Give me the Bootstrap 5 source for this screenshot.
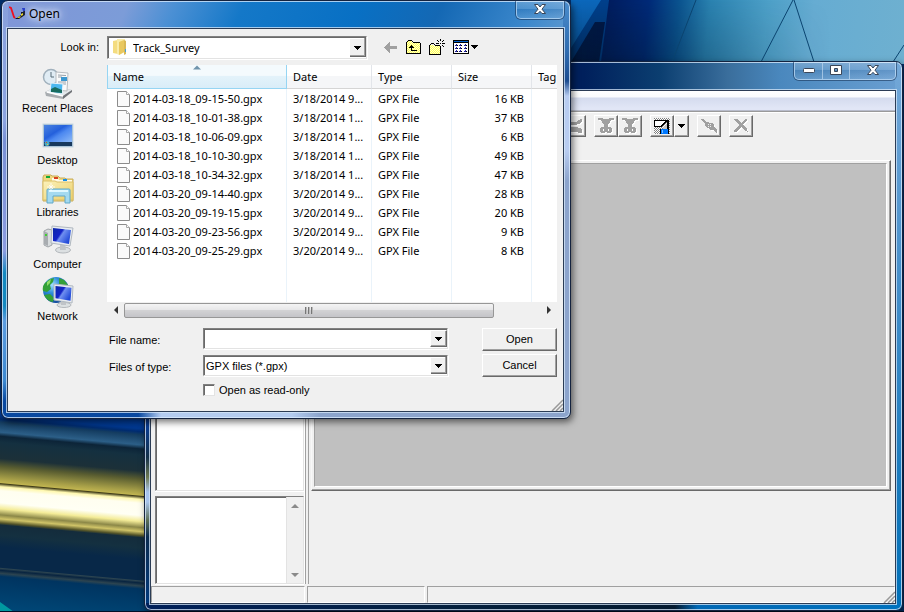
<!DOCTYPE html>
<html lang="en">
<head>
<meta charset="utf-8">
<meta name="viewport" content="width=device-width, initial-scale=1">
<title>Open</title>
<link href="https://cdn.jsdelivr.net/npm/bootstrap@5.3.0/dist/css/bootstrap.min.css" rel="stylesheet">
<style>
:root{--ui:"Liberation Sans",Arial,sans-serif;--shell:"Noto Sans","Open Sans",sans-serif;--face:#f0f0f0}
body{font-family:var(--ui);font-size:11px;line-height:16px;color:#000;background:#02285a}
.desktop{min-height:100vh}
.wallpaper{z-index:0}
.win{border:1px solid #14233f;border-radius:7px;box-shadow:inset 0 0 0 1px rgba(222,238,255,.75),2px 3px 7px rgba(0,0,0,.55)}
.client{background:var(--face);border:1px solid #2b3c55;box-shadow:0 0 0 1px rgba(215,232,250,.75)}
button,input,select{font:inherit;color:inherit;border-radius:0}

/* Editor window */
.win-main{left:144px;right:1px;top:61px;bottom:1px;z-index:1;padding:0 6px 6px 5px;
 background:
 linear-gradient(90deg,#00205a,#04203e 40%,#041a30 70%,#0068b5 73%,#0072be) left bottom/100% 7px no-repeat,
 linear-gradient(#00205c 0,#00205c 340px,#0a3c90 365px,#14304a 395px,#6c7850 415px,#a8c4ec 430px,#a8c4ec 440px,#5c7058 458px,#0c2c50 475px,#003a80) left top/6px 100% no-repeat,
 linear-gradient(#74a8d8,#4c92cc 35%,#1478bc 80%,#0070b8) right top/7px 100% no-repeat,
 linear-gradient(90deg,#00205c 58%,#0b3e70 68%,#3a6e9c 77%,#4a88be 84%,#6a9fd2) 0 0/100% 100%}
.title-main{height:28px}
.caption-group{border:1px solid rgba(200,226,250,.7);border-top:0;border-radius:0 0 5px 5px;overflow:hidden;box-shadow:0 0 0 1px rgba(20,45,80,.55)}
.caption-btn{border:0;background:linear-gradient(rgba(255,255,255,.22),rgba(255,255,255,.1) 50%,rgba(0,20,60,.06) 50%,rgba(255,255,255,.1));height:17px;width:27px}
.caption-btn + .caption-btn{border-left:1px solid rgba(190,215,240,.7)}
.caption-btn.close-cap{width:46px}
.menu-strip{height:20px;background:linear-gradient(#fff 0,#fafbfd 6px,#d4dbee 7px,#e1e6f6 17px);border-bottom:1px solid #b8bccb}
.tool-strip{height:49px;padding:3px 0 0 411px;border-top:1px solid #9a9a9a;box-shadow:inset 0 1px #fff}
.tool{width:24px;height:22px;border:1px solid;border-color:#fff #696969 #696969 #fff;background:var(--face);box-shadow:inset -1px -1px #a0a0a0}
.tool-drop{width:15px}
.left-pane{width:153px;padding-left:4px}
.sunk{background:#fff;border:1px solid;border-color:#808080 #e3e3e3 #e3e3e3 #808080;box-shadow:inset 1px 1px #696969,0 1px #fff}
.note-pane{height:88px;margin:5px 0 1px}
.v-scroll{width:17px;background:#f0f0f0;border-left:1px solid #e3e3e3;padding:5px 0 4px}
.split{width:5px;border-right:1px solid #a0a0a0;border-left:1px solid #fff;margin:0 2px 1px 0}
.split i{width:1px;background:#a0a0a0}
.right-pane{padding-right:4px}
.frame-out{border:1px solid;border-color:#fff #696969 #696969 #f8f8f8;box-shadow:inset -1px -1px #a0a0a0;padding:2px 3px 3px 2px}
.frame-in{background:#c0c0c0;border:1px solid;border-color:#a0a0a0 #fff #fff #a0a0a0}
.below-frame{height:94px}
.status-bar{height:18px;gap:2px;padding-top:1px}
.status-cell{border:1px solid;border-color:#a0a0a0 #fff #fff #a0a0a0}
.cell-a{width:154px}.cell-b{width:118px}

/* File dialog */
.win-open{left:1px;right:333px;top:0;z-index:2;padding:0 6px 6px 5px;
 background:
 linear-gradient(90deg,#0848a0 0,#0848a0 24%,#b4ccf0 28%,#b4ccf0 51%,#8ca4cc 56%,#8ca4cc) left bottom/100% 7px no-repeat,
 linear-gradient(#88a0dc 0,#8ca4e0 120px,#7890d4 140px,#8c9ce0 250px,#1488c0 272px,#1488c0 305px,#5c9ce0 320px,#3c88d0 380px,#0848a0 400px) left top/6px 100% no-repeat,
 linear-gradient(#4a8ccc 0,#2f6cb0 50px,#1c4c90 80px,#b8ccf0 95px,#b8ccf0 150px,#8ca4cc 180px) right top/7px 100% no-repeat,
 linear-gradient(115deg,#8096d8 0,#7c9cd8 22%,#4c90d4 30%,#1478c8 42%,#0870c4 62%,#1468b4 76%,#3c88cc 92%,#5c98d0) 0 0/100% 28px no-repeat,#6c90cc}
.title-open{height:27px;padding-left:2px}
.title-left{gap:3px;height:25px}
.title-text{font-family:var(--shell);font-size:12px;text-shadow:0 0 5px #dfe8ff,0 0 8px #dfe8ff,0 0 12px #dfe8ff}
.places{width:99px;padding-top:3px}
.place{border:0;background:none;padding:0;height:52px}
.look-row{padding-top:7px;height:36px}
.look-label{width:99px;padding:3px 8px 0 0}
.combo{height:23px;border:1px solid;border-color:#808080 #e3e3e3 #e3e3e3 #808080;box-shadow:inset 1px 1px #696969,1px 1px #fff;background:#fff;padding:1px 0 1px 1px}
.combo-look{width:260px}
.combo-sm{height:21px}
.combo select,.combo input{border:0;outline:0;background:#fff;appearance:none;padding:0 1px;min-width:0}
.combo select{padding-right:17px;
 background:#fff url("data:image/svg+xml,%3Csvg xmlns='http://www.w3.org/2000/svg' width='17' height='100%25' shape-rendering='crispEdges'%3E%3Crect width='17' height='100%25' fill='%23696969'/%3E%3Crect width='16' y='-1' height='100%25' fill='%23a0a0a0'/%3E%3Crect width='15' y='-2' height='100%25' fill='%23f0f0f0'/%3E%3Cpath d='M0 0h15v1h-14v40h-1z' fill='%23fff'/%3E%3Crect y='-1' width='1' height='100%25' fill='%23fff'/%3E%3Csvg y='50%25' overflow='visible'%3E%3Cpath d='M5 -2h7v1h-1v1h-1v1h-1v1h-1v-1h-1v-1h-1v-1h-1z'/%3E%3C/svg%3E%3C/svg%3E") no-repeat right center/17px 100%}
.combo .drop{width:17px;border:1px solid;border-color:#fff #696969 #696969 #fff;box-shadow:inset -1px -1px #a0a0a0;background:var(--face)}
.shell{font-family:var(--shell)}
.nav-tools{padding:3px 0 0 17px;gap:8px}
.nav-tools button{border:0;background:none;padding:0}
.list-area{min-width:0}
.edge{margin-right:6px}
.files{height:237px;background:#fff}
.files table{table-layout:fixed;height:100%;border-collapse:separate;border-spacing:0}
.files th{height:24px;padding:0 0 0 6px;font-weight:400;background:linear-gradient(#fff 50%,#f5f6f8 50%);border-right:1px solid #e2e5ea;border-bottom:1px solid #d5d5d5;overflow:hidden;white-space:nowrap}
.files th.sorted{background:linear-gradient(#f4fafd 45%,#e3f2fa 50%,#d9edf8);border:1px solid #96d5f3;border-top:0;padding-left:5px}
.files td{height:19px;padding:0 6px;border-right:1px solid #eaf3fa;white-space:nowrap;overflow:hidden}
.files td:first-child{padding-left:10px}
.files td.text-end{padding-right:7px}
.files th:last-child,.files td:last-child{border-right:0}
.files .rest td{height:auto}
.file-cell{gap:3px}
.col-name{width:180px}.col-date{width:85px}.col-mid{width:80px}
.h-scroll{height:16px;background:#f0f0f0}
.h-scroll .end{width:17px;border:0;background:none;padding:0}
.thumb{width:89%;height:15px;border:1px solid #979797;border-radius:2px;background:linear-gradient(#f4f4f4,#e6e6e8 45%,#d2d2d4 50%,#c4c4c8)}
.form-area{padding:0 0 13px 101px}
.field-label{width:94px;padding-top:2px}
.push{width:75px;height:23px;border:1px solid;border-color:#fff #696969 #696969 #fff;box-shadow:inset -1px -1px #a0a0a0;background:var(--face);padding:0 0 2px}
.buttons{margin-left:34px;gap:3px}
.fields{gap:6px}
.check{width:12px;height:12px;appearance:none;background:#fff;border:1px solid;border-color:#808080 #e3e3e3 #e3e3e3 #808080;box-shadow:inset 1px 1px #696969;margin:0}
.grip{right:0;bottom:0}
</style>
<script src="https://cdn.jsdelivr.net/npm/bootstrap@5.3.0/dist/js/bootstrap.bundle.min.js"></script>
</head>
<body>
<div class="desktop position-relative overflow-hidden">
<svg class="wallpaper position-absolute top-0 start-0 w-100 h-100" viewBox="0 0 904 612" preserveAspectRatio="none" aria-hidden="true">
 <defs>
  <linearGradient id="sky" gradientUnits="userSpaceOnUse" x1="600" y1="0" x2="904" y2="30"><stop offset="0" stop-color="#001a5a"/><stop offset=".16" stop-color="#002a78"/><stop offset=".26" stop-color="#0b5490"/><stop offset=".36" stop-color="#2a82b0"/><stop offset=".55" stop-color="#4da0c8"/><stop offset=".7" stop-color="#66acd2"/><stop offset="1" stop-color="#6eb0d0"/></linearGradient>
  <linearGradient id="shade" x1="0" y1="0" x2="0" y2="1"><stop offset="0" stop-color="#001428" stop-opacity="0"/><stop offset="1" stop-color="#001428" stop-opacity=".5"/></linearGradient>
  <linearGradient id="fade" x1="0" y1="0" x2="1" y2="0"><stop offset="0" stop-color="#fff"/><stop offset="1" stop-color="#000"/></linearGradient>
  <mask id="fm"><rect x="571" y="0" width="260" height="62" fill="url(#fade)"/></mask>
  <linearGradient id="bars" gradientUnits="userSpaceOnUse" x1="0" y1="410" x2="-18" y2="610">
   <stop offset="0" stop-color="#003c98"/><stop offset=".03" stop-color="#003890"/><stop offset=".045" stop-color="#002c70"/><stop offset=".06" stop-color="#143c60"/><stop offset=".11" stop-color="#2c5f88"/><stop offset=".13" stop-color="#0c2438"/><stop offset=".16" stop-color="#143040"/><stop offset=".24" stop-color="#1c3038"/><stop offset=".28" stop-color="#585c30"/><stop offset=".34" stop-color="#a8a048"/><stop offset=".36" stop-color="#c0b450"/><stop offset=".365" stop-color="#403c18"/><stop offset=".38" stop-color="#fff8b0"/><stop offset=".4" stop-color="#fffef0"/><stop offset=".46" stop-color="#fffff4"/><stop offset=".49" stop-color="#f4ec98"/><stop offset=".52" stop-color="#8c8848"/><stop offset=".54" stop-color="#d0c468"/><stop offset=".56" stop-color="#545428"/><stop offset=".57" stop-color="#142c3c"/><stop offset=".62" stop-color="#143040"/><stop offset=".68" stop-color="#082848"/><stop offset=".78" stop-color="#082848"/><stop offset=".785" stop-color="#2c4450"/><stop offset=".795" stop-color="#082440"/><stop offset=".81" stop-color="#2c4450"/><stop offset=".825" stop-color="#003460"/><stop offset="1" stop-color="#004878"/>
  </linearGradient>
 </defs>
 <rect width="904" height="612" fill="#02306c"/>
 <rect x="571" width="333" height="64" fill="url(#sky)"/>
 <path d="M571 0h38L571 58z" fill="#0c68bc"/><path d="M609 0h-8L571 48v14h30z" fill="#00408c"/><path d="M571 62l24-40 10 0-6 40z" fill="#001848"/>
 <rect x="571" width="333" height="62" fill="url(#shade)" mask="url(#fm)"/>
 <path d="M696 0l-24 62M793 0l-32 62M794 0l20 62M904 45l-11 17" stroke="#0b4470" fill="none"/>
 <rect y="410" width="160" height="202" fill="url(#bars)"/>
 <path d="M0 602l14 10H0z" fill="#0098a0"/>
 <rect y="611" width="904" height="1" fill="#001028"/>
</svg>

<main class="win win-main position-absolute d-flex flex-column" aria-label="Editor">
 <div class="title-main d-flex justify-content-end align-items-start">
  <div class="caption-group d-flex">
   <button class="caption-btn d-flex align-items-center justify-content-center p-0" aria-label="Minimize"><svg width="12" height="6"><rect x=".5" y=".5" width="11" height="4" rx="1" fill="#fff" stroke="#3a4658"/></svg></button>
   <button class="caption-btn d-flex align-items-center justify-content-center p-0" aria-label="Maximize"><svg width="12" height="11"><path d="M.5.500h11v9H.5z M4.500 3.500v3h3v-3z" fill="#fff" stroke="#3a4658" fill-rule="evenodd"/></svg></button>
   <button class="caption-btn close-cap d-flex align-items-center justify-content-center p-0" aria-label="Close window"><svg width="12" height="11"><path d="M.5.5h3.500L6 3l2-2.500h3.500L8 5.200l3.500 4.300H8L6 7.300 4 9.500H.5L4 5.200z" fill="#fff" stroke="#3a4658"/></svg></button>
  </div>
 </div>
 <div class="client flex-grow-1 d-flex flex-column position-relative">
  <div class="menu-strip flex-shrink-0"></div>
  <div class="tool-strip d-flex align-items-start flex-shrink-0">
   <svg width="0" height="0" class="position-absolute" aria-hidden="true"><defs>
    <g id="cut"><path fill-rule="evenodd" d="M0 0h5v1h6V0h5v2h-3v1h-1v2h-1v1h-1v3h3v1h1v4h-1v1h-4v-1H8v-2 2H7v1H3v-1H2v-4h1V9h3V6H5V5H4V3H3V2H0zM5 11v2h1v-2zM10 11v2h1v-2z"/></g>
    <g id="chev"><path d="M0 1h2l2 3h6l5-3h1v3l-3 2-4 1H5L1 5zM0 11h3l3-2h5l5 2v4h-4v-1H4v1H0z"/></g>
    <g id="join"><path d="M0 1h2l3 3h2l1 1h3l2 2v2l3 3v3h-1l-3-3h-3l-2-2H6L4 8V6L0 2z"/><path d="M7 6h1v1H7zM9 8h1v1H9zM7 8h1v1H7zM9 6h1v1H9z" fill="#f0f0f0"/></g>
    <g id="del"><path d="M1 1h3l4 4 4-4h2v1l-4 5 4 4v2h-1l-5-4-5 5H1v-1l5-6-5-5zM14 13h1v1h-1z"/></g>
   </defs></svg>
   <button class="tool p-0 d-flex align-items-center justify-content-center" aria-label="Split track"><svg width="17" height="17" shape-rendering="crispEdges"><use href="#chev" x="1" y="1" fill="#fff"/><use href="#chev" fill="#a0a0a0"/></svg></button>
   <button class="tool p-0 ms-2 d-flex align-items-center justify-content-center" aria-label="Cut before"><svg width="17" height="16" shape-rendering="crispEdges"><use href="#cut" x="1" y="1" fill="#fff"/><use href="#cut" fill="#a0a0a0"/></svg></button>
   <button class="tool p-0 d-flex align-items-center justify-content-center" aria-label="Cut after"><svg width="17" height="16" shape-rendering="crispEdges"><use href="#cut" x="1" y="1" fill="#fff"/><use href="#cut" fill="#a0a0a0"/></svg></button>
   <button class="tool p-0 ms-2 d-flex align-items-center justify-content-center" aria-label="Track color"><svg width="16" height="16" shape-rendering="crispEdges"><defs><pattern id="dith" width="2" height="2" patternUnits="userSpaceOnUse"><rect width="2" height="2" fill="#fff"/><path d="M0 0h1v1H0zM1 1h1v1H1z" fill="#808080"/></pattern></defs><rect width="16" height="16" fill="url(#dith)"/><path d="M1 3h11L7 8H1z" fill="#fff"/><path d="M9 9l4-4v6H9z" fill="#c8c8c8"/><path d="M0 2h15v13h-2V4h-1v1h-1v1h-1v1H9v1H8v1H0zM1 3v5h6V7h1V6h1V5h1V4h1V3z"/><rect x="6" y="11" width="9" height="5" fill="#000"/><rect x="7" y="11" width="7" height="5" fill="#0078ff"/><path d="M8 12h1v3H8z" fill="#7cc4ff"/></svg></button>
   <button class="tool tool-drop p-0 d-flex align-items-center justify-content-center" aria-label="More colors"><svg width="7" height="4" shape-rendering="crispEdges"><path d="M0 0h7v1H6v1H5v1H4v1H3V3H2V2H1V1H0z"/></svg></button>
   <button class="tool p-0 ms-2 d-flex align-items-center justify-content-center" aria-label="Join tracks"><svg width="17" height="17" shape-rendering="crispEdges"><use href="#join" x="1" y="1" fill="#fff"/><use href="#join" fill="#a0a0a0"/></svg></button>
   <button class="tool p-0 ms-2 d-flex align-items-center justify-content-center" aria-label="Delete"><svg width="17" height="16" shape-rendering="crispEdges"><use href="#del" x="1" y="1" fill="#fff"/><use href="#del" fill="#a0a0a0"/></svg></button>
  </div>
  <div class="d-flex flex-grow-1">
   <div class="left-pane d-flex flex-column flex-shrink-0">
    <div class="sunk flex-grow-1"></div>
    <div class="sunk note-pane d-flex justify-content-end">
     <div class="v-scroll d-flex flex-column justify-content-between align-items-center">
      <svg width="8" height="8"><path d="M0 6l4-4 4 4z" fill="#8a8a8a"/></svg>
      <svg width="8" height="8"><path d="M0 2l4 4 4-4z" fill="#8a8a8a"/></svg>
     </div>
    </div>
   </div>
   <div class="split d-flex flex-shrink-0"><i></i></div>
   <div class="right-pane flex-grow-1 d-flex flex-column">
    <div class="frame-out flex-grow-1 d-flex"><div class="frame-in flex-grow-1"></div></div>
    <div class="below-frame flex-shrink-0"></div>
   </div>
  </div>
  <div class="status-bar d-flex flex-shrink-0">
   <div class="status-cell cell-a"></div><div class="status-cell cell-b"></div><div class="status-cell flex-grow-1"></div>
  </div>
  <svg class="grip position-absolute" width="12" height="12"><path d="M1 12L12 1M5 12l7-7M9 12l3-3" stroke="#999" stroke-width="1.500"/></svg>
 </div>
</main>

<section class="win win-open position-absolute" role="dialog" aria-labelledby="dlgTitle">
 <div class="title-open d-flex align-items-start justify-content-between">
  <div class="title-left d-flex align-items-center">
   <svg width="17" height="16" aria-hidden="true"><path d="M0 1l2 1 3 9 1 1" stroke="#f01020" stroke-width="1.800" fill="none"/><path d="M6 12h2l4-3V6h2l2-4v7l-3 2-3 2H7z" fill="#101428"/><path d="M8 12l3-2 1 1-2 1z" fill="#e8d820"/><path d="M12 8l2-1v2l-2 1z" fill="#e8d820"/><path d="M13 2h3v3h-2z" fill="#2038c8"/></svg>
   <span class="title-text" id="dlgTitle">Open</span>
  </div>
  <div class="caption-group d-flex">
   <button class="caption-btn close-cap d-flex align-items-center justify-content-center p-0" aria-label="Close"><svg width="12" height="11"><path d="M.5.5h3.500L6 3l2-2.500h3.500L8 5.200l3.500 4.300H8L6 7.300 4 9.500H.5L4 5.200z" fill="#fff" stroke="#3a4658"/></svg></button>
  </div>
 </div>
 <div class="client position-relative">
  <div class="look-row d-flex align-items-start">
   <label class="look-label text-end flex-shrink-0" for="look">Look in:</label>
   <div class="combo combo-look shell d-flex align-items-stretch flex-shrink-0">
    <svg class="flex-shrink-0 ms-1" width="16" height="18" aria-hidden="true"><path d="M0 3l5-1v14l-5-1z" fill="#f4dc80"/><path d="M4 1h8v13l-6 3-2-1z" fill="#f9ecaa"/><path d="M6 4l5-2v12l-5 3z" fill="#e9c860"/><path d="M11 2l2 1v13l-2 1z" fill="#d8b858"/><path d="M12 11h1v3h-1z" fill="#48a0d8"/></svg>
    <select id="look" class="flex-grow-1 ps-1"><option>Track_Survey</option></select>
   </div>
   <div class="nav-tools d-flex align-items-center">
    <button aria-label="Back"><svg width="13" height="16" shape-rendering="crispEdges" class="d-block"><path d="M0 8h1V7h1V6h1V5h1V4h1V3h1v4h7v3H6v4H5v-1H4v-1H3v-1H2v-1H1V9H0z" fill="#a0a0a0"/></svg></button>
    <button aria-label="Up one level"><svg width="16" height="16" shape-rendering="crispEdges" class="d-block"><defs><pattern id="yel" width="2" height="2" patternUnits="userSpaceOnUse"><rect width="2" height="2" fill="#ff5"/><path d="M0 0h1v1H0zM1 1h1v1H1z" fill="#ffffd0"/></pattern></defs><path d="M2 2h5v1h8v11H2z" fill="url(#yel)"/><path d="M3 1h4v1H3zM2 2h1v1H2zM7 2h1v1H7zM1 3h1v11H1zM8 3h7v1H8zM15 4h1v10h-1zM1 14h15v1H1z"/><path d="M6 6h1v1h1v1h1v1H7v2h5v1H6V9H4V8h1V7h1z"/></svg></button>
    <button aria-label="New folder"><svg width="16" height="16" shape-rendering="crispEdges" class="d-block"><path d="M1 6h4v1h6v8H1z" fill="url(#yel)"/><path d="M2 4h3v1H2zM1 5h1v1H1zM5 5h1v1H5zM0 6h1v9H0zM6 6h5v1H6zM11 7h1v8h-1zM0 15h12v1H0z"/><path d="M11 0h1v2h-1zM8 1h1v1H8zM9 2h1v1H9zM14 1h1v1h-1zM13 2h1v1h-1zM7 4h3v1H7zM13 4h3v1h-3zM11 4h1v1h-1zM9 6h1v1H9zM13 6h1v1h-1zM14 7h1v1h-1z"/></svg></button>
    <button aria-label="View menu"><svg width="26" height="16" shape-rendering="crispEdges" class="d-block"><path d="M0 1h16v14H0z"/><path d="M1 4h14v10H1z" fill="#fff"/><path d="M1 2h14v1H1z" fill="#0060d0"/><path d="M2 6h2v1H2zM6 6h2v1H6zM11 6h2v1h-2zM2 9h2v1H2zM6 9h2v1H6zM11 9h2v1h-2zM2 12h2v1H2zM6 12h2v1H6zM11 12h2v1h-2zM3 5h1v1H3zM7 5h1v1H7zM12 5h1v1h-1zM3 8h1v1H3zM7 8h1v1H7zM12 8h1v1h-1zM3 11h1v1H3zM7 11h1v1H7zM12 11h1v1h-1z" fill="#2020a0"/><path d="M4 6h1v1H4zM8 6h1v1H8zM13 6h1v1h-1zM4 9h1v1H4zM8 9h1v1H8zM13 9h1v1h-1zM4 12h1v1H4zM8 12h1v1H8zM13 12h1v1h-1z"/><path d="M18 6h7v1h-1v1h-1v1h-1v1h-1V9h-1V8h-1V7h-1z"/></svg></button>
   </div>
  </div>
  <div class="d-flex">
   <nav class="places d-flex flex-column flex-shrink-0" aria-label="Places">
    <button class="place d-flex flex-column align-items-center"><svg width="32" height="32"><defs><linearGradient id="scr" x1="0" y1="0" x2="1" y2=".6"><stop offset="0" stop-color="#0c28a8"/><stop offset=".45" stop-color="#1424c8"/><stop offset=".55" stop-color="#7090f0"/><stop offset="1" stop-color="#2048d8"/></linearGradient></defs><path d="M3 24l10-5 17 3-9 9-17-3z" fill="#a8acb0"/><path d="M3 24l10-5 17 3-9 6z" fill="#e4e8ea"/><path d="M21 28l9-6v2l-9 7z" fill="#707478"/><circle cx="9" cy="9" r="7.500" fill="#e0ecf4" stroke="#a0b0bc" stroke-width="1.500"/><path d="M9 4v5h3" stroke="#586c78" fill="none"/><path d="M14 4l12 1-1 18-11-1z" fill="#fafafa" stroke="#b8bcc0"/><path d="M16 7l8 .5M16 9h4M16 14h8M16 16h8" stroke="#98a0a8"/><rect x="19" y="9" width="6" height="4" fill="#3c98d0"/><path d="M9 15l12 1-1 10-12-2z" fill="#4cb8f0" stroke="#e8f4fc"/><path d="M9 21l4-2 7 3v3l-11-1z" fill="#186c60"/><path d="M5 24l16 4" stroke="#fff" stroke-width="1.500"/></svg><span>Recent Places</span></button>
    <button class="place d-flex flex-column align-items-center"><svg width="32" height="32"><defs><linearGradient id="dsk" x1="0" y1="0" x2="1" y2="1"><stop offset="0" stop-color="#4c84e0"/><stop offset=".4" stop-color="#2460dc"/><stop offset=".55" stop-color="#4c88f0"/><stop offset="1" stop-color="#90bcf8"/></linearGradient></defs><rect x="1" y="4" width="30" height="23" fill="#90b0c8" stroke="#c8d8e4"/><rect x="2" y="5" width="28" height="18" fill="url(#dsk)"/><rect x="2" y="22" width="28" height="4" fill="#18385c"/><circle cx="5" cy="23.500" r="2.500" fill="#48a8c8"/><path d="M4 22h1v1H4z" fill="#e84820"/><path d="M5 24h1v1H5z" fill="#f0d820"/></svg><span>Desktop</span></button>
    <button class="place d-flex flex-column align-items-center"><svg width="32" height="32"><defs><linearGradient id="lib" x1="0" y1="0" x2="1" y2="1"><stop offset="0" stop-color="#fbf2bc"/><stop offset="1" stop-color="#ecce68"/></linearGradient></defs><path d="M1 5l1-2h7l1 1h6l2 2h5l1 1h7v22H1z" fill="#f0d880" stroke="#c8ac58"/><path d="M10 6h6l1 2h13v4H10z" fill="#fffbe8"/><rect x="4" y="4" width="4" height="2" fill="#10a838"/><rect x="12" y="5" width="4" height="2" fill="#d84020"/><rect x="21" y="7" width="4" height="2" fill="#1890e8"/><path d="M1 9h12l2 1h16v18H1z" fill="url(#lib)" stroke="#dcc068"/><path d="M5 18q0-1 1-1h21q1 0 1 1v13h-5v-7H11v7H5z" fill="#a4daf0" stroke="#60a8c8"/><path d="M7 19h19" stroke="#e0f8ff" stroke-width="2"/><path d="M9 11v8M5 15h8M7 13l4 4M11 13l-4 4" stroke="#fff" stroke-width=".8"/></svg><span>Libraries</span></button>
    <button class="place d-flex flex-column align-items-center"><svg width="32" height="32"><path d="M2 7l4-2 4 1v15l-4 2-4-2z" fill="#d8dcde" stroke="#a0a4a8"/><path d="M2 7l4 2v13l-4-2z" fill="#a8acb0"/><rect x="3" y="10" width="2" height="2" fill="#40d030"/><ellipse cx="21" cy="26" rx="7.500" ry="3" fill="#dce0e2" stroke="#b4b8bc"/><path d="M18 20h5l1 6h-6z" fill="#c0c4c8"/><path d="M10 2l21 2-3 18-19-3z" fill="#e8ecf0" stroke="#b0b8c0"/><path d="M11 4l18 2-2 14-16-3z" fill="url(#scr)"/></svg><span>Computer</span></button>
    <button class="place d-flex flex-column align-items-center"><svg width="32" height="32"><defs><radialGradient id="glb" cx=".35" cy=".3" r=".8"><stop offset="0" stop-color="#a0e0ff"/><stop offset=".4" stop-color="#2c8cd8"/><stop offset="1" stop-color="#0c3c90"/></radialGradient></defs><circle cx="14" cy="14" r="13" fill="url(#glb)"/><path d="M3 7l5-4 4-1-1 4-3 3 1 4-4 3-4-1q-1-5 2-8zM17 2l5 2 4 5-5 2-4-3zM2 19l6-1 4 4-1 4q-6-1-9-7z" fill="#34a038"/><path d="M5 6l4-3-1 4-3 3z" fill="#90dc68"/><ellipse cx="22" cy="29" rx="7" ry="2.500" fill="#dce0e2" stroke="#b4b8bc"/><path d="M19 24h5v5h-5z" fill="#c0c4c8"/><path d="M12 8l19 2-1 17-18-3z" fill="#e8ecf0" stroke="#b0b8c0"/><path d="M13.500 10l16 1.700-1 13-15-2.500z" fill="url(#scr)"/></svg><span>Network</span></button>
   </nav>
   <div class="list-area edge flex-grow-1">
    <div class="files shell overflow-hidden">
     <table class="w-100">
      <colgroup><col class="col-name"><col class="col-date"><col class="col-mid"><col class="col-mid"><col></colgroup>
      <thead><tr>
       <th class="sorted position-relative">Name<svg class="position-absolute top-0 start-50 translate-middle-x" width="8" height="5"><path d="M0 4.500L4 .5l4 4z" fill="#7094ac"/></svg></th><th>Date</th><th>Type</th><th>Size</th><th>Tag</th>
      </tr></thead>
      <tbody id="rows"></tbody>
     </table>
    </div>
    <div class="h-scroll d-flex align-items-center">
     <button class="end" aria-label="Scroll left"><svg width="4" height="8" class="d-block mx-auto"><path d="M4 0L0 4l4 4z" fill="#333"/></svg></button>
     <div class="flex-grow-1"><div class="thumb d-flex align-items-center justify-content-center"><svg width="9" height="7" shape-rendering="crispEdges"><path d="M0 0h2v7H0zM3 0h2v7H3zM6 0h2v7H6z" fill="#777"/><path d="M1 0h1v7H1zM4 0h1v7H4zM7 0h1v7H7z" fill="#bbb"/></svg></div></div>
     <button class="end" aria-label="Scroll right"><svg width="4" height="8" class="d-block mx-auto"><path d="M0 0l4 4-4 4z" fill="#333"/></svg></button>
    </div>
   </div>
  </div>
  <form class="form-area edge d-flex align-items-start" onsubmit="return false">
   <div class="fields d-flex flex-column flex-grow-1">
    <div class="d-flex align-items-center">
     <label class="field-label" for="fname">File name:</label>
     <div class="combo combo-sm d-flex flex-grow-1"><input id="fname" type="text" class="flex-grow-1"><button type="button" class="drop p-0 d-flex align-items-center justify-content-center" aria-label="Recent names"><svg width="7" height="4" shape-rendering="crispEdges"><path d="M0 0h7v1H6v1H5v1H4v1H3V3H2V2H1V1H0z"/></svg></button></div>
    </div>
    <div class="d-flex align-items-center">
     <label class="field-label" for="ftype">Files of type:</label>
     <div class="combo combo-sm d-flex flex-grow-1"><select id="ftype" class="flex-grow-1"><option>GPX files (*.gpx)</option></select></div>
    </div>
    <div class="d-flex align-items-center">
     <span class="field-label"></span>
     <input class="check" type="checkbox" id="ro"><label class="ps-1" for="ro">Open as read-only</label>
    </div>
   </div>
   <div class="buttons d-flex flex-column">
    <button class="push" type="submit">Open</button>
    <button class="push" type="button">Cancel</button>
   </div>
  </form>
  <svg class="grip position-absolute" width="12" height="12"><path d="M1 12L12 1M5 12l7-7M9 12l3-3" stroke="#999" stroke-width="1.500"/></svg>
 </div>
</section>
</div>
<script>
const files=[["2014-03-18_09-15-50","3/18/2014 9...",16],["2014-03-18_10-01-38","3/18/2014 1...",37],["2014-03-18_10-06-09","3/18/2014 1...",6],["2014-03-18_10-10-30","3/18/2014 1...",49],["2014-03-18_10-34-32","3/18/2014 1...",47],["2014-03-20_09-14-40","3/20/2014 9...",28],["2014-03-20_09-19-15","3/20/2014 9...",20],["2014-03-20_09-23-56","3/20/2014 9...",9],["2014-03-20_09-25-29","3/20/2014 9...",8]];
const page='<svg width="13" height="16" class="flex-shrink-0"><path d="M.5.5h9l3 3v12H.5z" fill="#fafafa" stroke="#8c8c8c"/><path d="M9.500.5v3h3" fill="#fff" stroke="#a8a8a8"/></svg>';
document.getElementById("rows").innerHTML=files.map(([n,d,s])=>`<tr><td><div class="d-flex align-items-center file-cell">${page}<span>${n}.gpx</span></div></td><td>${d}</td><td>GPX File</td><td class="text-end">${s} KB</td><td></td></tr>`).join("")+'<tr class="rest"><td></td><td></td><td></td><td></td><td></td></tr>';
</script>
</body>
</html>
